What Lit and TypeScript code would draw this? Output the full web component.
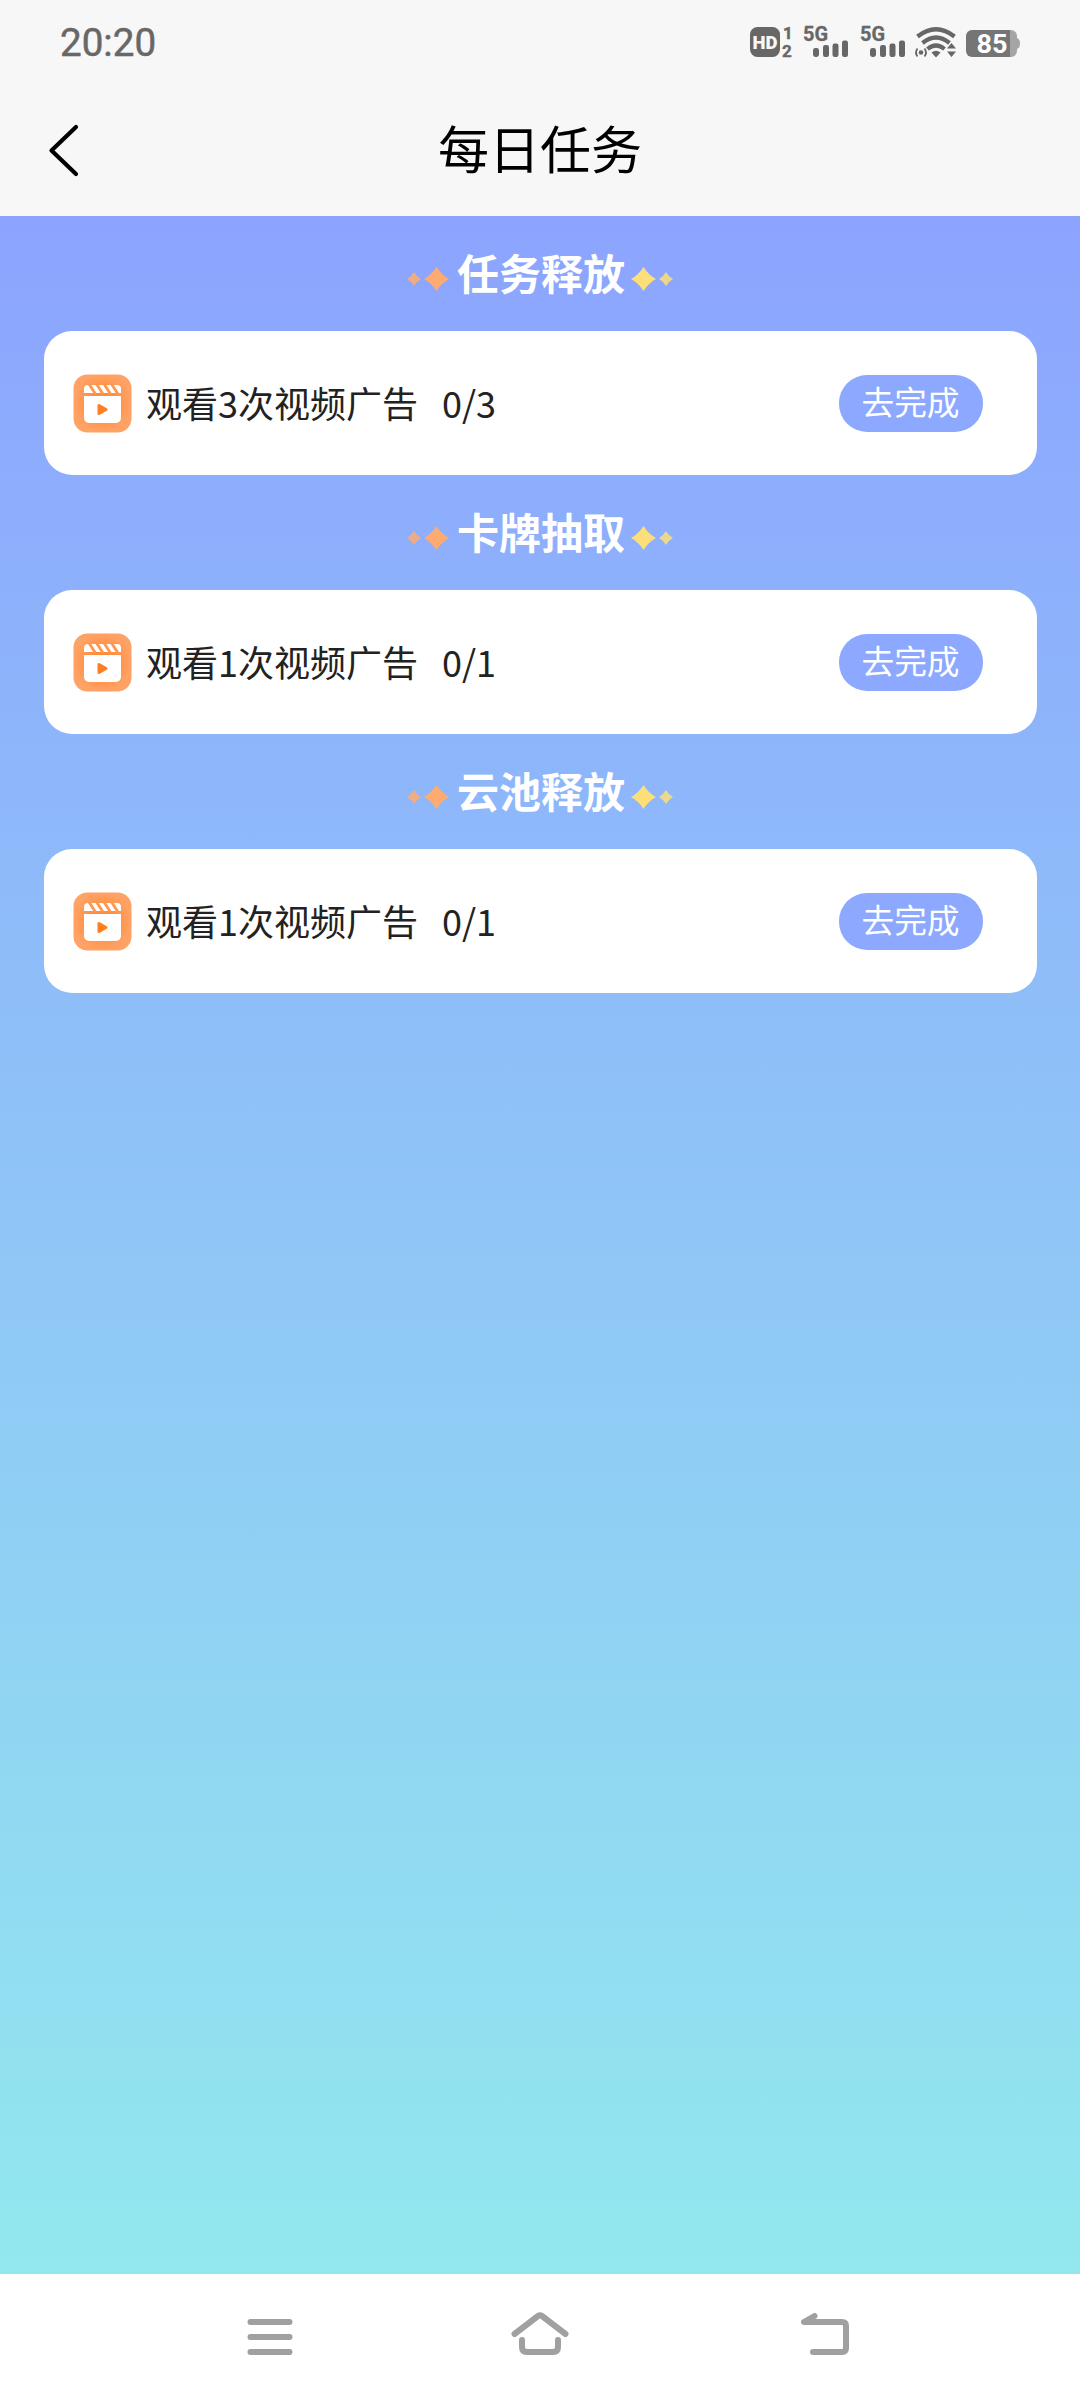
import { LitElement, html, svg, css } from "lit";
import { customElement, property } from "lit/decorators.js";

const signal = (x: number) => svg`
  <text x=${x - 1} y="26.3" class="net" textLength="25" lengthAdjust="spacingAndGlyphs">5G</text>
  <g fill="#676767">
    <rect x=${x + 9} y="33" width="6" height="9" rx="2.4"/>
    <rect x=${x + 19} y="30" width="6" height="12" rx="2.2"/>
    <rect x=${x + 28.5} y="28.5" width="6" height="13.5" rx="2.2"/>
    <rect x=${x + 38} y="25.5" width="6" height="16.5" rx="2.2"/>
  </g>`;

@customElement("status-bar")
export class StatusBar extends LitElement {
  static styles = css`
    :host { display: flex; justify-content: space-between; align-items: center; height: 84px; padding: 0 54px 0 60px; box-sizing: border-box; }
    .time { font: 400 38.6px/1 Roboto, sans-serif; color: #676767; -webkit-text-stroke: .5px #676767; padding-top: 2px; }
    svg { display: block; }
    text { fill: #676767; }
    .net { font: 700 20px Roboto, sans-serif; stroke: #676767; stroke-width: .3px; }
    .hd { font: 900 18px Roboto, sans-serif; fill: #f7f7f7; }
    .sim { font: 700 17px Roboto, sans-serif; stroke: #676767; stroke-width: .4px; }
    .charge { font: 700 26px Roboto, sans-serif; fill: #fff; }
  `;
  render() {
    return html`
      <span class="time">20:20</span>
      <svg width="280" height="60" viewBox="746 0 280 60">
        <g transform="translate(0 3)">
          <rect x="750" y="12" width="30" height="30" rx="7.5" fill="#676767"/>
          <text x="752.5" y="33.5" class="hd" textLength="25" lengthAdjust="spacingAndGlyphs">HD</text>
          <text x="783" y="24" class="sim">1</text>
          <text x="782" y="42" class="sim">2</text>
          ${signal(804)}
          ${signal(861)}
          <g fill="none" stroke="#676767" stroke-width="4.2">
            <path d="M917.500 21.500Q936 7 954.500 21.500"/>
            <path d="M922.500 28Q936 17 949.500 28"/>
            <path d="M927.500 34Q936 27 944.500 34"/>
          </g>
          <path d="M931.500 37.500Q936 34 940.500 37.500L936 42.500Z" fill="#676767"/>
          <circle cx="921" cy="37.500" r="2.300" fill="#676767"/>
          <path d="M917.500 33.500Q914.500 37.500 917.500 41.500M924.500 33.500Q927.500 37.500 924.500 41.500" fill="none" stroke="#676767" stroke-width="1.800"/>
          <path d="M947 33.500L951.500 28L956 33.500ZM947 36.500L951.500 42L956 36.500Z" fill="#676767"/>
          <path d="M972 15h38v27h-38a6 6 0 0 1-6-6v-15a6 6 0 0 1 6-6z" fill="#757575"/>
          <path d="M1010 15h1a6 6 0 0 1 6 6v2q3 1 3 5.500t-3 5.500v2a6 6 0 0 1-6 6h-1z" fill="#a5a5a5"/>
          <text x="976.500" y="38" class="charge" textLength="31" lengthAdjust="spacingAndGlyphs">85</text>
        </g>
      </svg>`;
  }
}

@customElement("task-section")
export class TaskSection extends LitElement {
  @property() heading = "";
  @property() task = "";
  @property() progress = "";
  static styles = css`
    :host { display: block; }
    .heading { display: flex; height: 115px; align-items: center; justify-content: center; color: #fff; }
    .heading b { font-size: 42px; line-height: 60px; font-weight: 700; margin: 0 5px 3px 7px; }
    .spark { display: block; margin-top: 11px; }
    .card { display: flex; align-items: center; height: 144px; margin: 0 43px 0 44px; padding: 0 54px 0 29px; background: #fff; border-radius: 28px; box-sizing: border-box; color: #222; font-size: 36px; }
    .icon { flex: none; margin-right: 14px; }
    .task, .count { padding-bottom: 2px; }
    .count { margin-left: 24px; flex: 1; }
    .go { border: 0; width: 144px; height: 57px; border-radius: 28px; background: #8ca8ff; color: #fff; font: inherit; font-size: 32.7px; line-height: 51px; padding: 0 1px 6px 0; }
  `;
  render() {
    return html`
      <div class="heading">
        <svg class="spark" width="44" height="26" viewBox="0 0 44 26" fill="#ffab70">
          <path d="M8 6Q10.500 10.500 15 13Q10.500 15.500 8 20Q5.500 15.500 1 13Q5.500 10.500 8 6Z" opacity=".85"/>
          <path d="M30.500 1Q35.500 9 43 13Q35.500 17 30.500 25Q25.500 17 18 13Q25.500 9 30.500 1Z"/>
        </svg>
        <b>${this.heading}</b>
        <svg class="spark" width="44" height="26" viewBox="0 0 44 26" fill="#fcdf78">
          <path d="M13.500 1Q18.500 9 26 13Q18.500 17 13.500 25Q8.500 17 1 13Q8.500 9 13.500 1Z"/>
          <path d="M36 6Q38.500 10.500 43 13Q38.500 15.500 36 20Q33.500 15.500 29 13Q33.500 10.500 36 6Z" opacity=".85"/>
        </svg>
      </div>
      <div class="card">
        <svg class="icon" width="59" height="59" viewBox="0 0 59 59">
          <defs><radialGradient id="g"><stop offset=".4" stop-color="#ff8c3c"/><stop offset="1" stop-color="#ffa266"/></radialGradient></defs>
          <rect x=".5" y=".5" width="58" height="58" rx="14" fill="url(#g)"/>
          <path d="M11 19V15a4 4 0 0 1 4-4h29a4 4 0 0 1 4 4v4zM11 22h37v22a5 5 0 0 1-5 5h-27a5 5 0 0 1-5-5z" fill="#fff"/>
          <path d="M16 10L22.500 20M23.500 10L30 20M31 10L37.500 20M38.500 10L45 20" stroke="#ff984f" stroke-width="2.800"/>
          <path d="M26 31.500v8l7-4z" fill="#ff7e20" stroke="#ff7e20" stroke-width="3" stroke-linejoin="round"/>
        </svg>
        <span class="task">${this.task}</span>
        <span class="count">${this.progress}</span>
        <button class="go">去完成</button>
      </div>`;
  }
}

@customElement("app-root")
export class AppRoot extends LitElement {
  static styles = css`
    :host { display: flex; flex-direction: column; width: 1080px; height: 2400px; background: #f7f7f7; font-family: "Noto Sans CJK SC", sans-serif; }
    .nav { display: grid; grid-template-columns: 120px 1fr 120px; align-items: center; height: 132px; }
    .title { margin: 0; font-size: 51px; line-height: 76px; font-weight: 400; color: #000; text-align: center; padding-bottom: 7px; }
    .back { display: block; margin-left: 46px; }
    .body { flex: 1; background: linear-gradient(180deg, #8ca4ff, #92e8ee); }
    .keys { display: grid; grid-template-columns: 1fr 1fr 1fr; height: 126px; padding: 0 132px; background: #fff; box-sizing: border-box; align-items: center; justify-items: center; fill: none; stroke: #a0a0a0; stroke-width: 6; stroke-linecap: round; stroke-linejoin: round; }
    .keys svg { display: block; }
  `;
  render() {
    return html`
      <status-bar></status-bar>
      <header class="nav">
        <svg class="back" width="36" height="56" viewBox="46 122 36 56" fill="none" stroke="#000" stroke-width="4.200" stroke-linecap="round" stroke-linejoin="round"><path d="M76 127L51.500 150.500L76 174"/></svg>
        <h1 class="title">每日任务</h1>
      </header>
      <main class="body">
        <task-section heading="任务释放" task="观看3次视频广告" progress="0/3"></task-section>
        <task-section heading="卡牌抽取" task="观看1次视频广告" progress="0/1"></task-section>
        <task-section heading="云池释放" task="观看1次视频广告" progress="0/1"></task-section>
      </main>
      <footer class="keys">
        <svg width="60" height="60" viewBox="238 2307 60 60"><path d="M250.500 2322H289.500M250.500 2337H289.500M250.500 2352H289.500"/></svg>
        <svg width="60" height="60" viewBox="510 2307 60 60"><path d="M514.500 2334L538 2316Q540 2314.500 542 2316L565.500 2334M522 2340V2347Q522 2352 527 2352H553Q558 2352 558 2347V2340"/></svg>
        <svg width="80" height="60" viewBox="772 2307 80 60"><path d="M814.500 2316L804 2322H842Q846 2322 846 2326V2348Q846 2352 842 2352H813"/></svg>
      </footer>`;
  }
}
